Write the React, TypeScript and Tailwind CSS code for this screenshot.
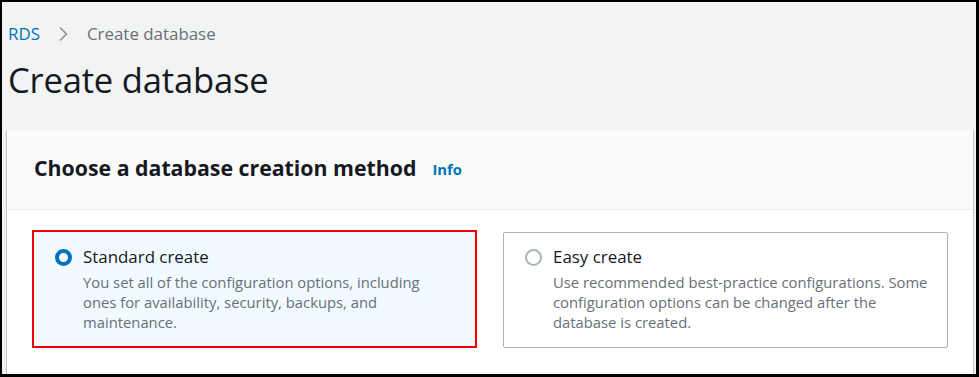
import React from "react";

export default function App() {
  const font = { fontFamily: '"Open Sans", "Noto Sans", Arial, sans-serif' };
  return (
    <div className="w-[979px] h-[377px] bg-black pt-[2px] pl-[2px] pr-[3px] pb-[3px]" style={font}>
      <div className="w-full h-full bg-[#f2f3f3] overflow-hidden flex flex-col">
        {/* breadcrumb */}
        <div className="flex items-center h-[20px] mt-[22px] pl-[6px] text-[16.9px] leading-[20px]">
          <span className="text-[#0073bb]">RDS</span>
          <svg className="ml-[18px] mr-[19px]" width="10" height="16" viewBox="0 0 10 16" fill="none">
            <path d="M2 1.5 L8.5 8 L2 14.5" stroke="#879596" strokeWidth="1.6" />
          </svg>
          <span className="text-[#687078]">Create database</span>
        </div>
        {/* title */}
        <h1 className="pl-[6px] mt-[14px] text-[34.6px] leading-[44px] text-[#16191f] font-normal tracking-[-0.2px]">
          Create database
        </h1>
        {/* card */}
        <div className="ml-[5px] mr-[3px] mt-[28px] flex-1 bg-white shadow-[0_1px_1px_0_rgba(0,28,36,0.3),1px_1px_1px_0_rgba(0,28,36,0.15),-1px_1px_1px_0_rgba(0,28,36,0.15)]">
          <div className="h-[80px] bg-[#fafafa] border-b border-[#eaeded] flex items-center pl-[27px] pb-[3px]">
            <h2 className="text-[21.3px] leading-[28px] font-bold text-[#16191f]">
              Choose a database creation method
            </h2>
            <span className="ml-[16px] mt-[3px] text-[14.8px] font-bold text-[#0073bb]">Info</span>
          </div>
          <div className="grid grid-cols-[445px_445px] gap-x-[26px] pl-[25px] pt-[20px]">
            <div className="h-[118px] border-2 border-[#f00000] bg-[#f1faff] flex pl-[21px] pt-[14px]">
              <div className="w-[17px] h-[17px] mt-[3px] rounded-full border-[4px] border-[#0073bb] bg-white shrink-0" />
              <div className="ml-[11px]">
                <div className="text-[16.9px] leading-[22px] text-[#16191f]">Standard create</div>
                <div className="mt-[4px] text-[14.8px] leading-[20px] text-[#687078] w-[360px]">
                  You set all of the configuration options, including ones for availability, security, backups, and maintenance.
                </div>
              </div>
            </div>
            <div className="h-[116px] mt-[2px] border border-[#aab7b8] rounded-[2px] bg-white flex pl-[21px] pt-[13px]">
              <div className="w-[17px] h-[17px] mt-[3px] rounded-full border-[2px] border-[#aab7b8] bg-white shrink-0" />
              <div className="ml-[11px]">
                <div className="text-[16.9px] leading-[22px] text-[#16191f]">Easy create</div>
                <div className="mt-[4px] text-[14.8px] leading-[20px] text-[#687078] w-[385px]">
                  Use recommended best-practice configurations. Some configuration options can be changed after the database is created.
                </div>
              </div>
            </div>
          </div>
        </div>
      </div>
    </div>
  );
}
